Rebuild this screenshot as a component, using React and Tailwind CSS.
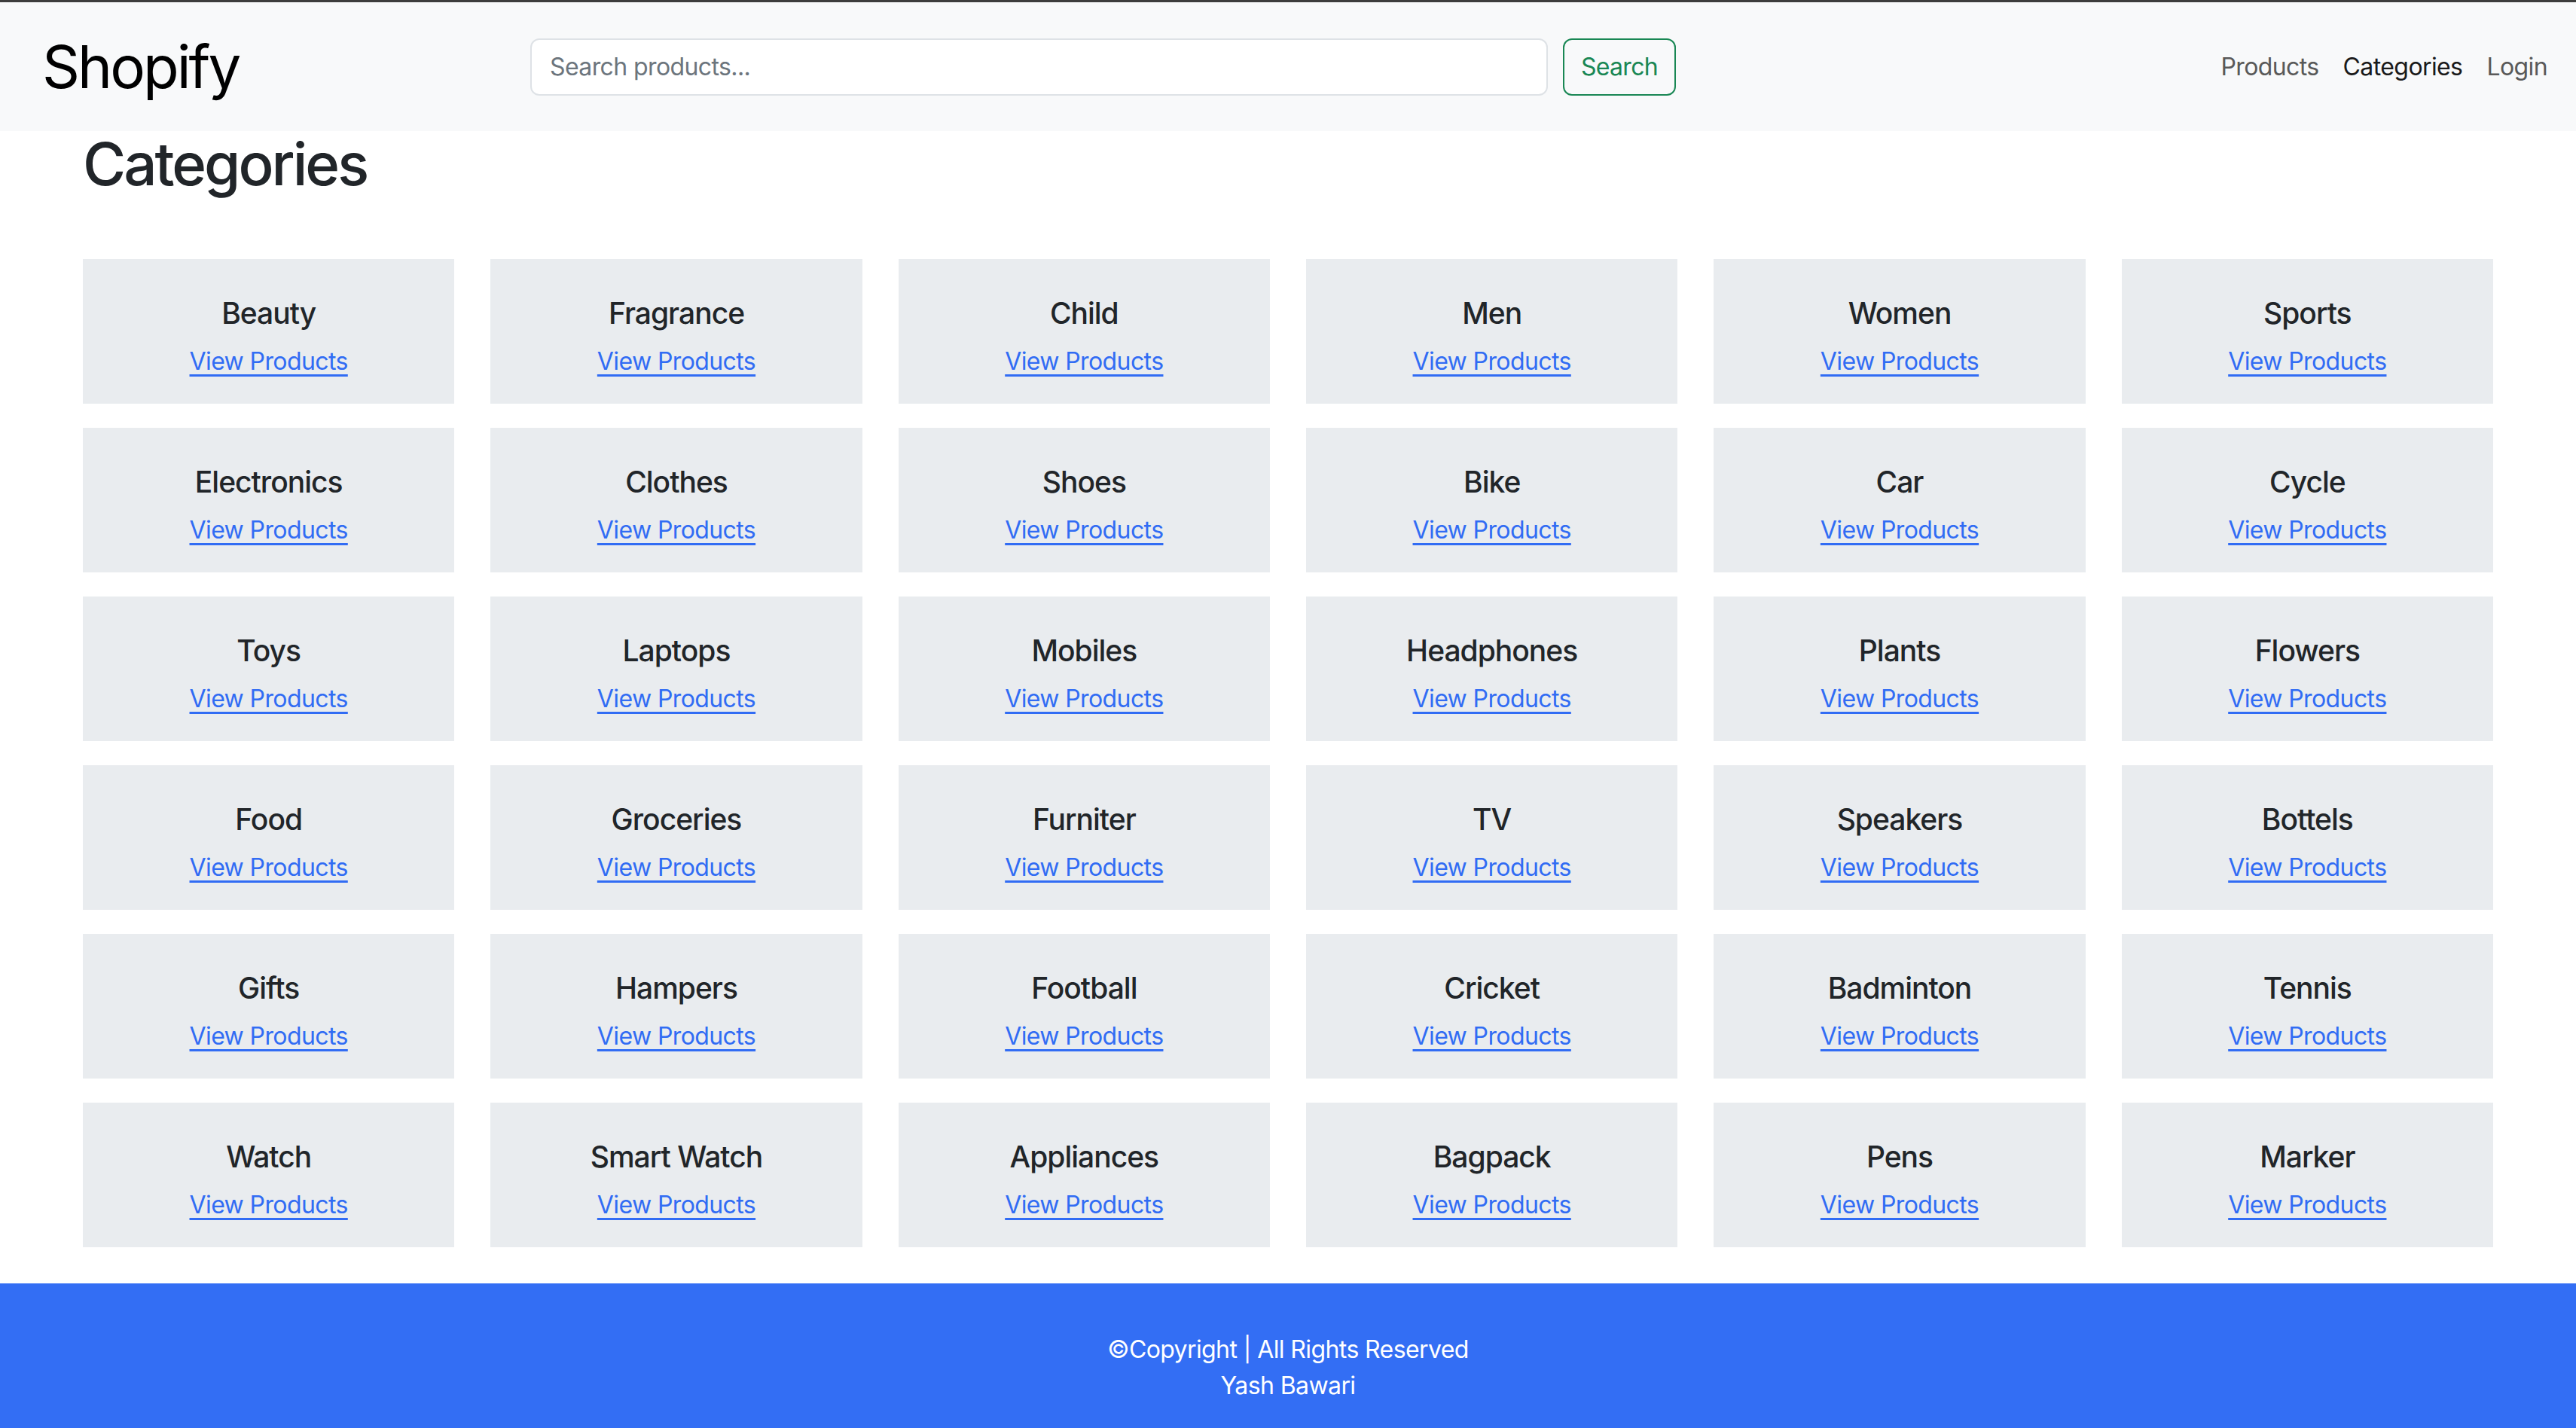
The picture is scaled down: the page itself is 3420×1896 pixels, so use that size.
import { useState } from "react";

const categories = [
  "Beauty", "Fragrance", "Child", "Men", "Women", "Sports",
  "Electronics", "Clothes", "Shoes", "Bike", "Car", "Cycle",
  "Toys", "Laptops", "Mobiles", "Headphones", "Plants", "Flowers",
  "Food", "Groceries", "Furniter", "TV", "Speakers", "Bottels",
  "Gifts", "Hampers", "Football", "Cricket", "Badminton", "Tennis",
  "Watch", "Smart Watch", "Appliances", "Bagpack", "Pens", "Marker",
];

const links = [
  { label: "Products", active: false },
  { label: "Categories", active: true },
  { label: "Login", active: false },
];

const Header = () => {
  const [query, setQuery] = useState("");

  return (
    <header className="flex h-[174px] items-center border-t-[3px] border-[#3d3d3d] bg-[#f8f9fa] pl-[56px] pr-[22px]">
      <div className="w-[648px] text-[78px] leading-none tracking-[-3px] text-black">Shopify</div>

      <form className="flex items-center gap-[20px]" onSubmit={(e) => e.preventDefault()}>
        <input
          value={query}
          onChange={(e) => setQuery(e.target.value)}
          placeholder="Search products..."
          className="h-[76px] w-[1351px] rounded-[12px] border-2 border-[#dee2e6] bg-white px-[24px] text-[32px] tracking-[-0.6px] text-[#212529] outline-none placeholder:text-[#6c757d]"
        />
        <button
          type="submit"
          className="h-[76px] w-[150px] rounded-[12px] border-2 border-[#198754] text-[32px] tracking-[-0.7px] text-[#198754]"
        >
          Search
        </button>
      </form>

      <nav className="ml-auto flex items-center text-[32px] tracking-[-0.6px]">
        {links.map((l) => (
          <a
            key={l.label}
            href="#"
            className={l.active ? "px-[16px] text-[#1a1a1a]" : "px-[16px] text-[#595959]"}
          >
            {l.label}
          </a>
        ))}
      </nav>
    </header>
  );
};

const CategoryCard = ({ name }) => (
  <div className="flex h-[192px] flex-col items-center bg-[#e9ecef] pt-[48px]">
    <h5 className="text-[39px] font-medium leading-[48px] tracking-[-1px] text-[#212529]">{name}</h5>
    <a href="#" className="mt-[16px] text-[32px] leading-[48px] tracking-[-0.6px] text-[#316cf4] underline underline-offset-[6px]">
      View Products
    </a>
  </div>
);

export default function App() {
  return (
    <div className="min-h-screen bg-white font-['Inter',sans-serif] text-[#212529]">
      <Header />

      <main className="px-[110px] pb-[48px]">
        <h1 className="text-[78px] font-medium leading-[88px] tracking-[-3px] text-[#212529]">Categories</h1>
        <div className="mt-[82px] grid grid-cols-6 gap-x-[48px] gap-y-[32px]">
          {categories.map((c) => (
            <CategoryCard key={c} name={c} />
          ))}
        </div>
      </main>

      <footer className="h-[192px] bg-[#336ef4] pt-[64px] text-center text-[32px] leading-[48px] tracking-[-0.6px] text-white">
        <p>©Copyright | All Rights Reserved</p>
        <p>Yash Bawari</p>
      </footer>
    </div>
  );
}
